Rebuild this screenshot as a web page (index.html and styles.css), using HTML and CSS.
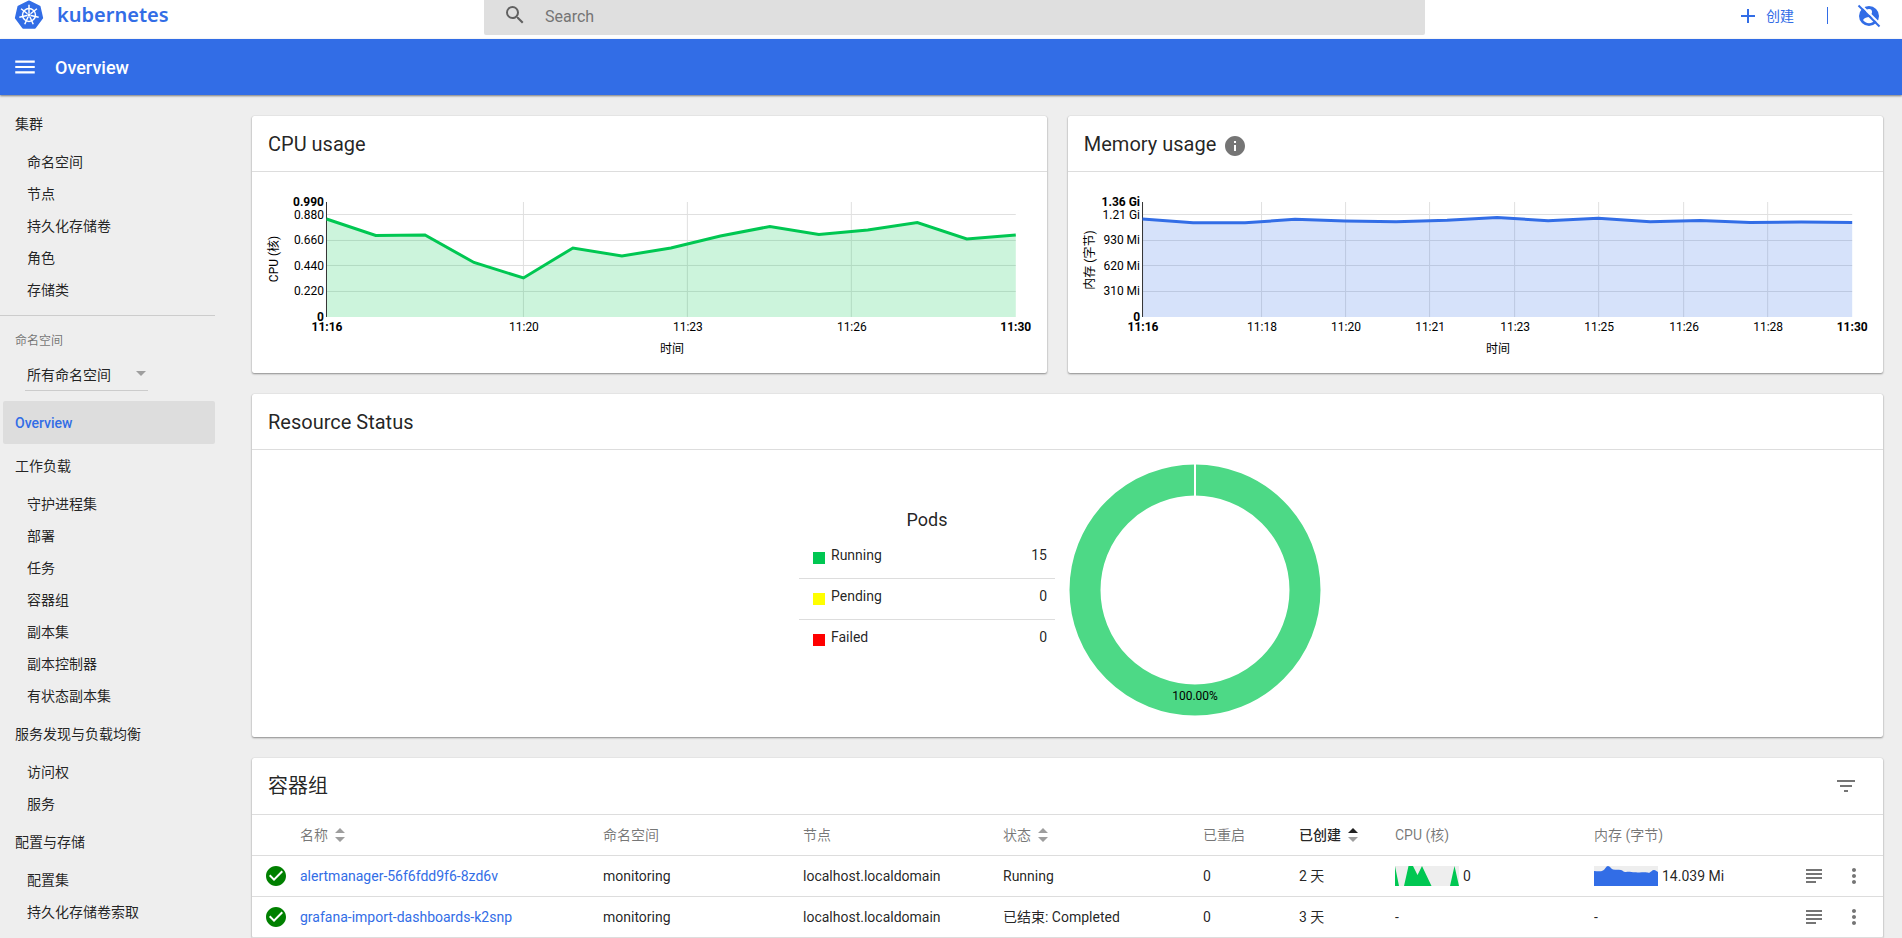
FILE: index.html
```html
<!DOCTYPE html>
<html lang="zh-CN">
<head>
  <meta charset="UTF-8" />
  <meta name="viewport" content="width=device-width, initial-scale=1.0" />
  <title>Overview - Kubernetes Dashboard</title>
  <link rel="stylesheet" href="styles.css">
</head>
<body>
  <header class="top-bar">
    <a class="logo" href="#overview">
      <svg width="30" height="30" viewBox="0 0 30 31" aria-hidden="true">
        <path class="logo-shape" d="M15 1.5 25.9 6.8 28.6 18.6 21.1 28.6H8.9L1.4 18.6 4.1 6.8Z"/>
        <circle class="logo-wheel" cx="15" cy="15.5" r="6.7"/>
        <path class="logo-spokes" d="M15 13.5V5M16.6 14.2 23.2 9M17 16 25 17.9M15.9 17.3 19.4 25M14.1 17.3 10.6 25M13 16 5 17.9M13.4 14.2 6.8 9"/>
        <circle class="logo-hub" cx="15" cy="15.5" r="1.8"/>
      </svg>
      <span class="logo-text">kubernetes</span>
    </a>
    <label class="search">
      <svg width="24" height="24" viewBox="0 0 24 24" aria-hidden="true">
        <path d="M15.5 14h-.79l-.28-.27A6.471 6.471 0 0 0 16 9.5 6.5 6.5 0 1 0 9.5 16c1.61 0 3.09-.59 4.23-1.57l.27.28v.79l5 4.99L20.49 19l-4.99-5zm-6 0C7.01 14 5 11.99 5 9.5S7.01 5 9.5 5 14 7.01 14 9.5 11.99 14 9.5 14z"/>
      </svg>
      <input class="search-input" type="text" placeholder="Search" aria-label="Search">
    </label>
    <div class="top-actions">
      <button class="create-button">
        <svg width="24" height="24" viewBox="0 0 24 24" aria-hidden="true"><path d="M19 13h-6v6h-2v-6H5v-2h6V5h2v6h6v2z"/></svg>
        <span>创建</span>
      </button>
      <span class="separator"></span>
      <button class="icon-button user-button" aria-label="User">
        <svg width="24" height="24" viewBox="0 0 24 24" aria-hidden="true">
          <circle class="user-disc" cx="12" cy="12" r="10"/>
          <circle class="user-person" cx="12" cy="8" r="3"/>
          <path class="user-person" d="M6 16c1.500-2.300 4-3 6-3s4.500.7 6 3c-1.300 2-3.500 3.200-6 3.200S7.300 18 6 16z"/>
          <path class="user-gap" d="M3.500.5 23 20"/>
          <path class="user-slash" d="M1.500 1.500 22.500 22.500"/>
        </svg>
      </button>
    </div>
  </header>

  <div class="action-bar">
    <button class="icon-button menu-button" aria-label="Menu">
      <svg width="26" height="26" viewBox="0 0 24 24" aria-hidden="true"><path d="M3 18h18v-2H3v2zm0-5h18v-2H3v2zm0-7v2h18V6H3z"/></svg>
    </button>
    <h1 class="page-title">Overview</h1>
  </div>

  <div class="layout">
    <nav class="sidebar">
      <a class="nav-heading" href="#cluster">集群</a>
      <a class="nav-item" href="#namespace">命名空间</a>
      <a class="nav-item" href="#node">节点</a>
      <a class="nav-item" href="#pv">持久化存储卷</a>
      <a class="nav-item" href="#role">角色</a>
      <a class="nav-item" href="#storageclass">存储类</a>
      <div class="namespace-block">
        <label class="namespace-label" for="namespaceSelect">命名空间</label>
        <div class="namespace-select">
          <select id="namespaceSelect">
            <option>所有命名空间</option>
            <option>monitoring</option>
          </select>
        </div>
      </div>
      <a class="nav-heading active" href="#overview">Overview</a>
      <a class="nav-heading" href="#workload">工作负载</a>
      <a class="nav-item" href="#daemonset">守护进程集</a>
      <a class="nav-item" href="#deployment">部署</a>
      <a class="nav-item" href="#job">任务</a>
      <a class="nav-item" href="#pod">容器组</a>
      <a class="nav-item" href="#replicaset">副本集</a>
      <a class="nav-item" href="#rc">副本控制器</a>
      <a class="nav-item" href="#statefulset">有状态副本集</a>
      <a class="nav-heading" href="#discovery">服务发现与负载均衡</a>
      <a class="nav-item" href="#ingress">访问权</a>
      <a class="nav-item" href="#service">服务</a>
      <a class="nav-heading" href="#config">配置与存储</a>
      <a class="nav-item" href="#configmap">配置集</a>
      <a class="nav-item" href="#pvc">持久化存储卷索取</a>
    </nav>

    <main class="content">
      <div class="usage-row">
        <section class="card">
          <div class="card-header"><h2>CPU usage</h2></div>
          <svg class="chart cpu" viewBox="0 0 795 201" role="img" aria-label="CPU usage">
            <path class="grid-lines" d="M75 42.500H764M75 68.500H764M75 93.500H764M75 119.500H764M271.500 30V145M435.500 30V145M599.500 30V145"/>
            <path class="area" d="M74.500 47 123.750 63.500 173 63 222 90.500 271.500 106 321 76 370 84 419 76 468.500 64 518 54.500 567 62.500 616 58 665.500 50.500 715 67 764 63V145H74.500Z"/>
            <path class="axis" d="M74.500 30V145"/>
            <path class="line" d="M74.500 47 123.750 63.500 173 63 222 90.500 271.500 106 321 76 370 84 419 76 468.500 64 518 54.500 567 62.500 616 58 665.500 50.500 715 67 764 63"/>
            <g class="y-labels">
              <text class="edge" x="72" y="34">0.990</text>
              <text x="72" y="47">0.880</text>
              <text x="72" y="72">0.660</text>
              <text x="72" y="98">0.440</text>
              <text x="72" y="123">0.220</text>
              <text class="edge" x="72" y="149">0</text>
            </g>
            <g class="x-labels">
              <text class="edge" x="75" y="159">11:16</text>
              <text x="272" y="159">11:20</text>
              <text x="436" y="159">11:23</text>
              <text x="600" y="159">11:26</text>
              <text class="edge" x="764" y="159">11:30</text>
              <text x="420" y="181">时间</text>
              <text transform="translate(26 87) rotate(-90)">CPU (核)</text>
            </g>
          </svg>
        </section>

        <section class="card">
          <div class="card-header">
            <h2>Memory usage</h2>
            <svg class="info-icon" width="24" height="24" viewBox="0 0 24 24" aria-hidden="true"><path d="M12 2C6.480 2 2 6.480 2 12s4.480 10 10 10 10-4.480 10-10S17.520 2 12 2zm1 15h-2v-6h2v6zm0-8h-2V7h2v2z"/></svg>
          </div>
          <svg class="chart memory" viewBox="0 0 815 201" role="img" aria-label="Memory usage">
            <path class="grid-lines" d="M75 42.500H784M75 68.500H784M75 93.500H784M75 119.500H784M193.500 30V145M277.500 30V145M361.500 30V145M446.500 30V145M530.500 30V145M615.500 30V145M699.500 30V145"/>
            <path class="area" d="M74.500 47 125 50.700 177 50.700 227 47.300 277 49 328 49.800 379 48.300 429 45.400 480 48.700 530 46.200 582 49.700 632 48.500 682 50.500 733 50 784 50.600V145H74.500Z"/>
            <path class="axis" d="M74.500 30V145"/>
            <path class="line" d="M74.500 47 125 50.700 177 50.700 227 47.300 277 49 328 49.800 379 48.300 429 45.400 480 48.700 530 46.200 582 49.700 632 48.500 682 50.500 733 50 784 50.600"/>
            <g class="y-labels">
              <text class="edge" x="72" y="34">1.36 Gi</text>
              <text x="72" y="47">1.21 Gi</text>
              <text x="72" y="72">930 Mi</text>
              <text x="72" y="98">620 Mi</text>
              <text x="72" y="123">310 Mi</text>
              <text class="edge" x="72" y="149">0</text>
            </g>
            <g class="x-labels">
              <text class="edge" x="75" y="159">11:16</text>
              <text x="194" y="159">11:18</text>
              <text x="278" y="159">11:20</text>
              <text x="362" y="159">11:21</text>
              <text x="447" y="159">11:23</text>
              <text x="531" y="159">11:25</text>
              <text x="616" y="159">11:26</text>
              <text x="700" y="159">11:28</text>
              <text class="edge" x="784" y="159">11:30</text>
              <text x="430" y="181">时间</text>
              <text transform="translate(26 88) rotate(-90)">内存 (字节)</text>
            </g>
          </svg>
        </section>
      </div>

      <section class="card">
        <div class="card-header"><h2>Resource Status</h2></div>
        <div class="status-body">
          <div class="legend">
            <h3>Pods</h3>
            <ul>
              <li><span class="swatch running"></span><span>Running</span><span class="count">15</span></li>
              <li><span class="swatch pending"></span><span>Pending</span><span class="count">0</span></li>
              <li><span class="swatch failed"></span><span>Failed</span><span class="count">0</span></li>
            </ul>
          </div>
          <svg class="donut" width="281" height="287" viewBox="0 0 281 287" role="img" aria-label="Pods running 100.00%">
            <circle class="donut-ring" cx="140" cy="140" r="110"/>
            <path class="donut-gap" d="M140 13V47"/>
            <text x="140" y="250">100.00%</text>
          </svg>
        </div>
      </section>

      <section class="card">
        <div class="card-header table-title">
          <h2>容器组</h2>
          <button class="icon-button filter-button" aria-label="Filter">
            <svg width="24" height="24" viewBox="0 0 24 24" aria-hidden="true"><path d="M10 18h4v-2h-4v2zM3 6v2h18V6H3zm3 7h12v-2H6v2z"/></svg>
          </button>
        </div>
        <table class="pod-table">
          <colgroup>
            <col class="col-icon"><col><col class="col-wide"><col class="col-wide"><col class="col-wide">
            <col class="col-short"><col class="col-short"><col class="col-cpu"><col class="col-wide">
            <col class="col-logs"><col class="col-menu">
          </colgroup>
          <thead>
            <tr>
              <th></th>
              <th><button class="sort-button">名称<svg width="10" height="14" viewBox="0 0 10 14" aria-hidden="true"><path d="M0 5 5 0l5 5zM0 9l5 5 5-5z"/></svg></button></th>
              <th>命名空间</th>
              <th>节点</th>
              <th><button class="sort-button">状态<svg width="10" height="14" viewBox="0 0 10 14" aria-hidden="true"><path d="M0 5 5 0l5 5zM0 9l5 5 5-5z"/></svg></button></th>
              <th>已重启</th>
              <th><button class="sort-button sorted">已创建<svg width="10" height="14" viewBox="0 0 10 14" aria-hidden="true"><path class="up" d="M0 5 5 0l5 5z"/><path d="M0 9l5 5 5-5z"/></svg></button></th>
              <th>CPU (核)</th>
              <th>内存 (字节)</th>
              <th></th>
              <th></th>
            </tr>
          </thead>
          <tbody>
            <tr>
              <td class="status-cell"><svg width="24" height="24" viewBox="0 0 24 24" aria-label="OK"><path d="M12 2C6.480 2 2 6.480 2 12s4.480 10 10 10 10-4.480 10-10S17.520 2 12 2zm-2 15l-5-5 1.410-1.410L10 14.170l7.590-7.590L19 8l-9 9z"/></svg></td>
              <td><a href="#alertmanager">alertmanager-56f6fdd9f6-8zd6v</a></td>
              <td>monitoring</td>
              <td>localhost.localdomain</td>
              <td>Running</td>
              <td>0</td>
              <td>2 天</td>
              <td>
                <div class="metric">
                  <svg class="sparkline cpu" width="64" height="20" viewBox="0 0 64 20" aria-hidden="true"><path d="M0 0 4 20H0ZM9 20 13.500 0H18L22.500 9 27 0 36.500 20ZM55 20 59.500 0 64 20Z"/></svg>
                  <span>0</span>
                </div>
              </td>
              <td>
                <div class="metric">
                  <svg class="sparkline memory" width="64" height="20" viewBox="0 0 64 20" aria-hidden="true"><path d="M0 5C3 5 6 6 9 4.500 11 3.500 12 0 14 0S17 3 19 3.500C22 4 24 3.500 27 4 29 4.500 29 6 32 6 35 5 38 6.500 42 6.200 46 7 52 5.500 55 7 57 6 58 4 60 4S62 5 64 6V20H0Z"/></svg>
                  <span>14.039 Mi</span>
                </div>
              </td>
              <td><button class="icon-button row-button" aria-label="Logs"><svg width="16" height="14" viewBox="0 0 16 14" aria-hidden="true"><path d="M0 0h16v2H0zM0 4h16v2H0zM0 8h16v2H0zM0 12h10v2H0z"/></svg></button></td>
              <td><button class="icon-button row-button" aria-label="Actions"><svg width="24" height="24" viewBox="0 0 24 24" aria-hidden="true"><path d="M12 8c1.100 0 2-.9 2-2s-.9-2-2-2-2 .9-2 2 .9 2 2 2zm0 2c-1.100 0-2 .9-2 2s.9 2 2 2 2-.9 2-2-.9-2-2-2zm0 6c-1.100 0-2 .9-2 2s.9 2 2 2 2-.9 2-2-.9-2-2-2z"/></svg></button></td>
            </tr>
            <tr>
              <td class="status-cell"><svg width="24" height="24" viewBox="0 0 24 24" aria-label="OK"><path d="M12 2C6.480 2 2 6.480 2 12s4.480 10 10 10 10-4.480 10-10S17.520 2 12 2zm-2 15l-5-5 1.410-1.410L10 14.170l7.590-7.590L19 8l-9 9z"/></svg></td>
              <td><a href="#grafana">grafana-import-dashboards-k2snp</a></td>
              <td>monitoring</td>
              <td>localhost.localdomain</td>
              <td>已结束: Completed</td>
              <td>0</td>
              <td>3 天</td>
              <td>-</td>
              <td>-</td>
              <td><button class="icon-button row-button" aria-label="Logs"><svg width="16" height="14" viewBox="0 0 16 14" aria-hidden="true"><path d="M0 0h16v2H0zM0 4h16v2H0zM0 8h16v2H0zM0 12h10v2H0z"/></svg></button></td>
              <td><button class="icon-button row-button" aria-label="Actions"><svg width="24" height="24" viewBox="0 0 24 24" aria-hidden="true"><path d="M12 8c1.100 0 2-.9 2-2s-.9-2-2-2-2 .9-2 2 .9 2 2 2zm0 2c-1.100 0-2 .9-2 2s.9 2 2 2 2-.9 2-2-.9-2-2-2zm0 6c-1.100 0-2 .9-2 2s.9 2 2 2 2-.9 2-2-.9-2-2-2z"/></svg></button></td>
            </tr>
          </tbody>
        </table>
      </section>
    </main>
  </div>
</body>
</html>
```
FILE: styles.css
```css
:root {
  --primary: #326de6;
  --green: #00c752;
  --bg: #eee;
  --border: #ddd;
  --text: rgba(0, 0, 0, 0.87);
  --muted: rgba(0, 0, 0, 0.54);
}

* {
  margin: 0;
  padding: 0;
  box-sizing: border-box;
}

body {
  display: flex;
  flex-direction: column;
  height: 100vh;
  overflow: hidden;
  background: var(--bg);
  color: var(--text);
  font-family: Roboto, "Noto Sans CJK SC", sans-serif;
  font-size: 14px;
  line-height: 20px;
}

a {
  color: var(--primary);
  text-decoration: none;
}

button,
input,
select {
  border: none;
  background: none;
  color: inherit;
  font: inherit;
}

button {
  cursor: pointer;
}

svg {
  flex: none;
  display: block;
}

.icon-button {
  display: flex;
  align-items: center;
  justify-content: center;
}

/* top bar */
.top-bar {
  flex: none;
  display: flex;
  align-items: flex-start;
  height: 39px;
  background: #fff;
}

.logo {
  display: flex;
  align-items: center;
  gap: 13px;
  width: 484px;
  height: 30px;
  padding-left: 14px;
}

.logo-shape {
  fill: var(--primary);
  stroke: var(--primary);
  stroke-width: 2;
  stroke-linejoin: round;
}

.logo-wheel,
.logo-spokes {
  fill: none;
  stroke: #fff;
  stroke-width: 1.5;
}

.logo-hub {
  fill: #fff;
}

.logo-text {
  font-family: "Noto Sans", sans-serif;
  font-size: 20px;
  font-weight: 600;
}

.search {
  flex: 1;
  display: flex;
  gap: 18px;
  height: 35px;
  padding: 3px 19px 0;
  background: #dfdfdf;
  border-radius: 0 0 2px 2px;
}

.search svg {
  fill: #616161;
}

.search-input {
  flex: 1;
  height: 26px;
  font-size: 16px;
  outline: none;
}

.search-input::placeholder {
  color: #757575;
}

.top-actions {
  display: flex;
  align-items: center;
  justify-content: flex-end;
  width: 477px;
  height: 31px;
  padding-right: 21px;
  color: var(--primary);
}

.top-actions svg {
  fill: var(--primary);
}

.create-button {
  display: flex;
  align-items: center;
  gap: 6px;
}

.separator {
  width: 1px;
  height: 17px;
  margin: 0 29px 0 33px;
  background: var(--primary);
}

.top-actions .user-person {
  fill: #fff;
}

.user-gap,
.user-slash {
  stroke: #fff;
  stroke-width: 2;
}

.user-slash {
  stroke: var(--primary);
}

.action-bar {
  flex: none;
  display: flex;
  align-items: center;
  gap: 17px;
  height: 56px;
  padding-left: 12px;
  background: var(--primary);
  color: #fff;
  box-shadow: 0 1px 2px rgba(0, 0, 0, 0.5);
  z-index: 1;
}

.menu-button svg {
  fill: #fff;
}

.page-title {
  padding-top: 2px;
  font-size: 18px;
  font-weight: 500;
}

/* sidebar */
.layout {
  flex: 1;
  display: flex;
  min-height: 0;
}

.sidebar {
  flex: none;
  width: 215px;
  padding-top: 7px;
}

.nav-heading,
.nav-item {
  display: block;
  height: 44px;
  padding-left: 15px;
  color: var(--text);
  line-height: 44px;
}

.nav-item {
  height: 32px;
  padding-left: 27px;
  line-height: 32px;
}

.nav-heading.active {
  height: 43px;
  margin-left: 3px;
  padding-left: 12px;
  background: #ddd;
  border-radius: 2px;
  color: var(--primary);
  font-weight: 500;
}

.namespace-block {
  margin: 9px 0 10px;
  padding-top: 15px;
  border-top: 1px solid #ccc;
}

.namespace-label {
  display: block;
  padding-left: 15px;
  color: var(--muted);
  font-size: 12px;
}

.namespace-select {
  position: relative;
  width: 123px;
  height: 31px;
  margin: 9px 0 0 25px;
  border-bottom: 1px solid #ccc;
}

.namespace-select select {
  width: 100%;
  height: 30px;
  padding-left: 2px;
  appearance: none;
  outline: none;
}

.namespace-select::after {
  content: "";
  position: absolute;
  top: 11px;
  right: 2px;
  border: 5px solid transparent;
  border-top-color: #9e9e9e;
  border-bottom: none;
  pointer-events: none;
}

/* cards */
.content {
  flex: 1;
  display: flex;
  flex-direction: column;
  gap: 21px;
  min-width: 0;
  padding: 21px 19px 0 37px;
}

.usage-row {
  display: grid;
  grid-template-columns: 39fr 40fr;
  gap: 21px;
}

.card {
  background: #fff;
  border-radius: 2px;
  box-shadow: 0 1px 2px rgba(0, 0, 0, 0.4), 0 0 1px rgba(0, 0, 0, 0.2);
}

.card-header {
  display: flex;
  align-items: center;
  height: 56px;
  padding: 0 16px;
  border-bottom: 1px solid var(--border);
}

.card-header h2 {
  font-size: 20px;
  font-weight: 400;
}

.card-header svg {
  fill: #757575;
}

.info-icon {
  margin: 4px 0 0 7px;
}

.table-title {
  justify-content: space-between;
  height: 57px;
  padding-right: 25px;
}

/* charts */
.chart {
  width: 100%;
  height: auto;
}

.chart.cpu {
  color: var(--green);
}

.chart.memory {
  color: var(--primary);
}

.grid-lines {
  stroke: #e0e0e0;
}

.area {
  fill: currentColor;
  fill-opacity: 0.2;
}

.axis {
  stroke: #333;
}

.line {
  fill: none;
  stroke: currentColor;
  stroke-width: 3;
}

.chart text,
.donut text {
  fill: #000;
  font-size: 12px;
}

.y-labels {
  text-anchor: end;
}

.x-labels,
.donut text {
  text-anchor: middle;
}

.chart .edge {
  font-weight: 700;
}

/* resource status */
.status-body {
  display: flex;
  justify-content: center;
}

.legend {
  width: 256px;
  padding-top: 58px;
}

.legend h3 {
  margin-bottom: 6px;
  font-size: 18px;
  font-weight: 400;
  line-height: 24px;
  text-align: center;
}

.legend ul {
  list-style: none;
}

.legend li {
  display: flex;
  align-items: center;
  gap: 6px;
  height: 41px;
  padding: 0 8px 7px 14px;
  border-bottom: 1px solid var(--border);
}

.legend li:last-child {
  border-bottom: none;
}

.swatch {
  width: 12px;
  height: 12px;
  margin-top: 6px;
}

.swatch.running {
  background: var(--green);
}

.swatch.pending {
  background: #ff0;
}

.swatch.failed {
  background: #f00;
}

.count {
  margin-left: auto;
}

.donut-ring {
  fill: none;
  stroke: #4dd986;
  stroke-width: 31;
}

.donut-gap {
  stroke: #fff;
  stroke-width: 2;
}

/* pod table */
.pod-table {
  width: 100%;
  table-layout: fixed;
  border-collapse: separate;
  border-spacing: 0;
}

.pod-table th,
.pod-table td {
  height: 41px;
  border-bottom: 1px solid var(--border);
  text-align: left;
  white-space: nowrap;
}

.pod-table th {
  color: var(--muted);
  font-weight: 400;
}

.col-icon {
  width: 48px;
}

.col-wide {
  width: 200px;
}

.col-short {
  width: 96px;
}

.col-cpu {
  width: 199px;
}

.col-logs {
  width: 40px;
}

.col-menu {
  width: 49px;
}

.sort-button {
  display: flex;
  align-items: center;
  gap: 7px;
}

.sort-button svg {
  fill: #9e9e9e;
}

.sorted {
  color: var(--text);
  font-weight: 500;
}

.sorted .up {
  fill: #212121;
}

.status-cell svg {
  margin-left: 12px;
  fill: #008000;
}

.metric {
  display: flex;
  align-items: center;
  gap: 4px;
}

.sparkline {
  background: #eee;
}

.sparkline.cpu {
  fill: var(--green);
}

.sparkline.memory {
  fill: var(--primary);
}

.row-button {
  width: 40px;
  height: 40px;
}

.row-button svg {
  fill: #757575;
}
```
